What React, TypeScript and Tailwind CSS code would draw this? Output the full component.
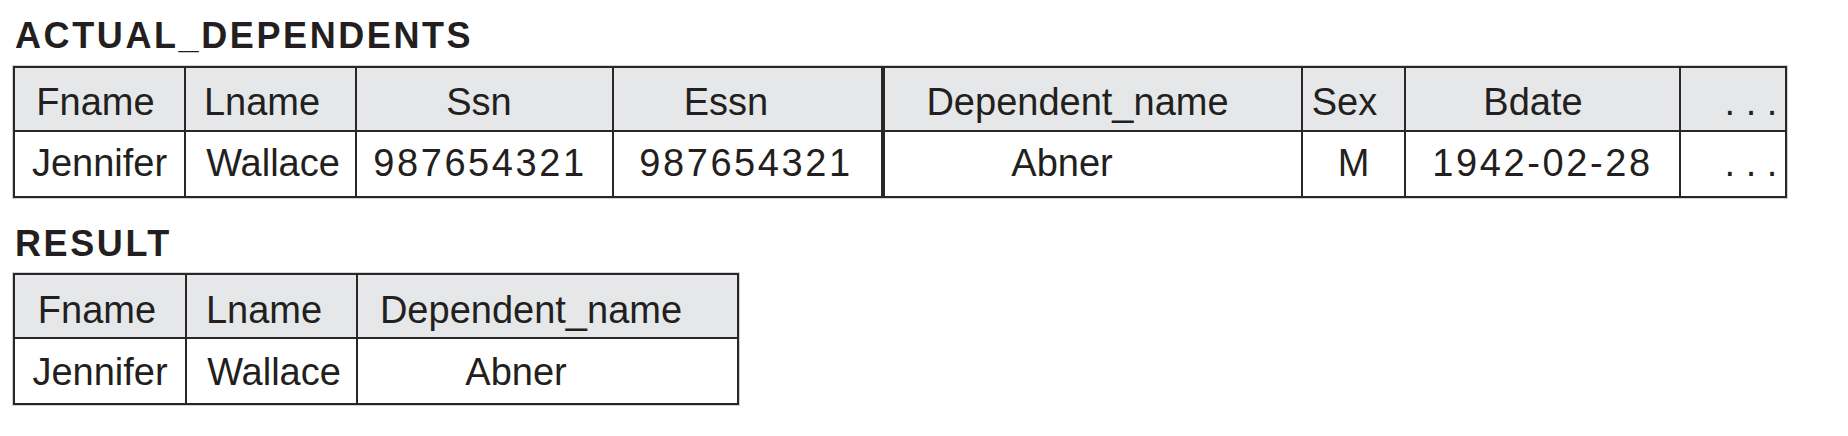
type Cell = {
  text: string;
  // extra classes per cell, mostly padding to nudge the text off-center like the print
  cls?: string;
  digits?: boolean;
};

type Column = {
  width: string;
  border: string;
  head: Cell;
  value: Cell;
};

const INK = "text-[#231f20]";

const DEPENDENT_COLUMNS: Column[] = [
  { width: "w-[171px]", border: "border-r-2", head: { text: "Fname", cls: "pr-[8px]" }, value: { text: "Jennifer" } },
  { width: "w-[171px]", border: "border-r-2", head: { text: "Lname", cls: "pr-[17px]" }, value: { text: "Wallace", cls: "pl-[5px]" } },
  { width: "w-[257px]", border: "border-r-2", head: { text: "Ssn", cls: "pr-[11px]" }, value: { text: "987654321", digits: true, cls: "pr-[9px]" } },
  { width: "w-[271px]", border: "border-r-4", head: { text: "Essn", cls: "pr-[43px]" }, value: { text: "987654321", digits: true, cls: "pr-[3px]" } },
  { width: "w-[418px]", border: "border-r-2", head: { text: "Dependent_name", cls: "pr-[31px]" }, value: { text: "Abner", cls: "pr-[62px]" } },
  { width: "w-[103px]", border: "border-r-2", head: { text: "Sex", cls: "pr-[18px]" }, value: { text: "M" } },
  { width: "w-[275px]", border: "border-r-2", head: { text: "Bdate", cls: "pr-[19px]" }, value: { text: "1942-02-28", digits: true } },
  { width: "w-[104px]", border: "", head: { text: ". . .", cls: "pl-[36px]" }, value: { text: ". . .", cls: "pl-[36px]" } },
];

const RESULT_COLUMNS: Column[] = [
  { width: "w-[172px]", border: "border-r-2", head: { text: "Fname", cls: "pr-[6px]" }, value: { text: "Jennifer" } },
  { width: "w-[171px]", border: "border-r-2", head: { text: "Lname", cls: "pr-[15px]" }, value: { text: "Wallace", cls: "pl-[5px]" } },
  { width: "w-[379px]", border: "", head: { text: "Dependent_name", cls: "pr-[33px]" }, value: { text: "Abner", cls: "pr-[63px]" } },
];

function Title({ children, className }: { children: string; className: string }) {
  return (
    <h2
      className={`${className} ${INK} pl-[15px] text-[36px] leading-[40px] font-bold tracking-[2.6px] font-['Liberation_Sans',Arial,sans-serif]`}
    >
      {children}
    </h2>
  );
}

function RelationTable({
  columns,
  headPad,
  valuePad,
}: {
  columns: Column[];
  headPad: string;
  valuePad: string;
}) {
  return (
    <div className="ml-[13px] inline-flex border-2 border-[#2a2627] shadow-[0_0_0_1px_rgba(0,0,0,0.18)]">
      {columns.map((col, i) => (
        <div key={i} className={`${col.width} ${col.border} flex flex-col border-[#2a2627]`}>
          <div
            className={`h-[64px] border-b-2 border-[#2a2627] bg-[#e6e7e8] text-center ${headPad} ${col.head.cls ?? ""}`}
          >
            <span className="leading-[44px] whitespace-nowrap">{col.head.text}</span>
          </div>
          <div className={`h-[64px] bg-white text-center ${valuePad} ${col.value.cls ?? ""}`}>
            <span className={`leading-[44px] whitespace-nowrap ${col.value.digits ? "tracking-[2.6px]" : ""}`}>
              {col.value.text}
            </span>
          </div>
        </div>
      ))}
    </div>
  );
}

export default function App() {
  return (
    <div
      className={`w-[1848px] h-[436px] bg-white ${INK} pt-[16px] text-[38px] font-['Liberation_Sans',Arial,sans-serif]`}
    >
      <Title className="mb-[10px]">ACTUAL_DEPENDENTS</Title>
      <RelationTable columns={DEPENDENT_COLUMNS} headPad="pt-[6px]" valuePad="pt-[3px]" />

      <Title className="mt-[26px] mb-[9px]">RESULT</Title>
      <RelationTable columns={RESULT_COLUMNS} headPad="pt-[7px]" valuePad="pt-[5px]" />
    </div>
  );
}
